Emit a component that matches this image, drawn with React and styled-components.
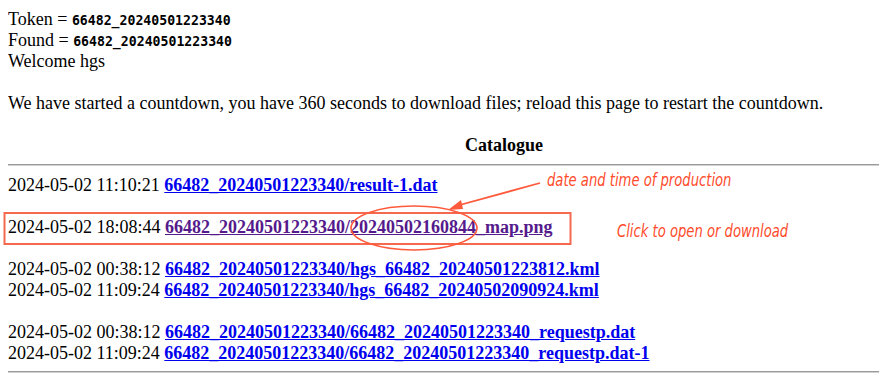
import React from 'react';
import styled, { createGlobalStyle } from 'styled-components';

const GlobalStyle = createGlobalStyle`
    html, body {
        overflow: hidden;
    }
    body {
        margin: 9px 8px 8px;
        font-family: "Liberation Serif", "Times New Roman", serif;
        font-size: 18px;
        line-height: 21px;
        color: #000;
        background: #fff;
    }
`;

const files = [
    { date: '2024-05-02 11:10:21', path: '66482_20240501223340/result-1.dat' },
    null,
    { date: '2024-05-02 18:08:44', path: '66482_20240501223340/20240502160844_map.png', visited: true },
    null,
    { date: '2024-05-02 00:38:12', path: '66482_20240501223340/hgs_66482_20240501223812.kml' },
    { date: '2024-05-02 11:09:24', path: '66482_20240501223340/hgs_66482_20240502090924.kml' },
    null,
    { date: '2024-05-02 00:38:12', path: '66482_20240501223340/66482_20240501223340_requestp.dat' },
    { date: '2024-05-02 11:09:24', path: '66482_20240501223340/66482_20240501223340_requestp.dat-1' },
];

const App = () => {
    return (
        <>
            <GlobalStyle />
            <Page>
                <Line>Token = <Code>66482_20240501223340</Code></Line>
                <Line>Found = <Code>66482_20240501223340</Code></Line>
                <Line>Welcome hgs</Line>
                <Blank />
                <Line>
                    We have started a countdown, you have 360 seconds to download files; reload this page to restart the countdown.
                </Line>
                <Blank />
                <Title>Catalogue</Title>
                <Rule $above={8} $below={9} />
                {files.map((f, i) =>
                    f ? (
                        <Line key={i}>
                            {f.date} <FileLink href="#" $visited={f.visited}>{f.path}</FileLink>
                        </Line>
                    ) : (
                        <Blank key={i} />
                    )
                )}
                <Rule $above={7} $below={8} />
            </Page>

            <Overlay width="887" height="385" viewBox="0 0 887 385">
                <rect x="4.5" y="213" width="566" height="31" fill="none" stroke="#f5694f" strokeWidth="2" />
                <ellipse cx="414" cy="228" rx="63" ry="22" fill="none" stroke="#ff5a3c" strokeWidth="1.6" />
                <line x1="540" y1="183" x2="456" y2="206" stroke="#ff5a3c" strokeWidth="1.8" />
                <polygon points="448,210 461,200 463,209" fill="#ff5a3c" />
            </Overlay>
            <Note $left={547} $top={170}>date and time of production</Note>
            <Note $left={617} $top={221}>Click to open or download</Note>
        </>
    );
};

export default App;

// Styled Components
const Page = styled.div`
    width: 992px;
`;

const Line = styled.div`
    white-space: nowrap;
`;

const Blank = styled.div`
    height: 21px;
`;

const Code = styled.code`
    font-family: "DejaVu Sans Mono", "Liberation Mono", monospace;
    font-size: 13.2px;
    font-weight: bold;
    line-height: 1;
`;

const Title = styled.div`
    text-align: center;
    font-weight: bold;
`;

const Rule = styled.hr`
    margin: ${(p) => p.$above}px 0 ${(p) => p.$below}px;
    height: 0;
    border: none;
    border-top: 1px solid #9a9a9a;
    border-bottom: 1px solid #d0d0d0;
`;

const FileLink = styled.a`
    font-weight: bold;
    color: ${(p) => (p.$visited ? '#551a8b' : '#0000ee')};
    text-decoration: underline;
`;

const Overlay = styled.svg`
    position: absolute;
    top: 0;
    left: 0;
    pointer-events: none;
`;

const Note = styled.span`
    position: absolute;
    left: ${(p) => p.$left}px;
    top: ${(p) => p.$top}px;
    font-family: "DejaVu Sans Condensed", "DejaVu Sans", sans-serif;
    font-style: italic;
    font-size: 17px;
    line-height: 20px;
    color: #ff4b2b;
    white-space: nowrap;
    transform: scaleX(0.86);
    transform-origin: left center;
`;
